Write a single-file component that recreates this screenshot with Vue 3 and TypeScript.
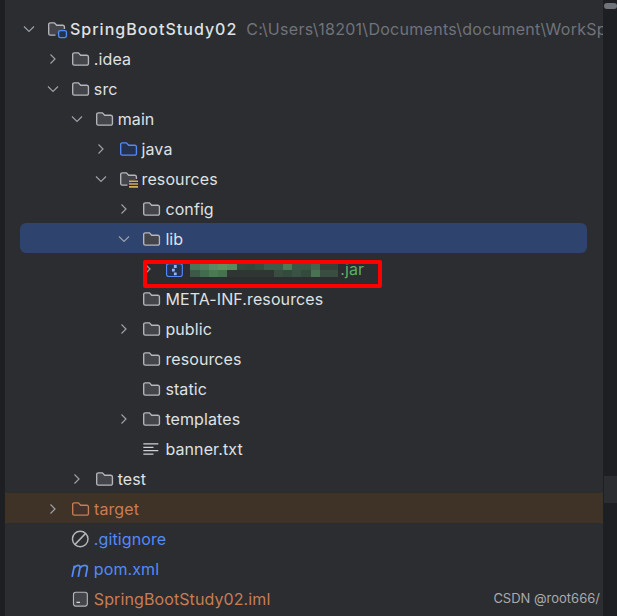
<script setup lang="ts">
type Icon = 'module' | 'folder' | 'source' | 'res' | 'jar' | 'text' | 'target' | 'ignore' | 'maven' | 'iml'

interface Row {
  name: string
  depth: number
  icon: Icon
  arrow?: 'open' | 'closed'
  tone?: string
  state?: string
}

const rows: Row[] = [
  { name: 'SpringBootStudy02', depth: 0, icon: 'module', arrow: 'open', tone: 'root' },
  { name: '.idea', depth: 1, icon: 'folder', arrow: 'closed' },
  { name: 'src', depth: 1, icon: 'folder', arrow: 'open' },
  { name: 'main', depth: 2, icon: 'folder', arrow: 'open' },
  { name: 'java', depth: 3, icon: 'source', arrow: 'closed' },
  { name: 'resources', depth: 3, icon: 'res', arrow: 'open' },
  { name: 'config', depth: 4, icon: 'folder', arrow: 'closed' },
  { name: 'lib', depth: 4, icon: 'folder', arrow: 'open', state: 'selected' },
  { name: '.jar', depth: 5, icon: 'jar', arrow: 'closed', tone: 'green' },
  { name: 'META-INF.resources', depth: 4, icon: 'folder' },
  { name: 'public', depth: 4, icon: 'folder', arrow: 'closed' },
  { name: 'resources', depth: 4, icon: 'folder' },
  { name: 'static', depth: 4, icon: 'folder' },
  { name: 'templates', depth: 4, icon: 'folder', arrow: 'closed' },
  { name: 'banner.txt', depth: 4, icon: 'text' },
  { name: 'test', depth: 2, icon: 'folder', arrow: 'closed' },
  { name: 'target', depth: 1, icon: 'target', arrow: 'closed', tone: 'orange', state: 'ignored' },
  { name: '.gitignore', depth: 1, icon: 'ignore', tone: 'blue' },
  { name: 'pom.xml', depth: 1, icon: 'maven', tone: 'blue' },
  { name: 'SpringBootStudy02.iml', depth: 1, icon: 'iml', tone: 'orange' },
]

// blurred-out part of the jar name
const mosaic = [
  '#4d7559', '#527d5c', '#5a8a63', '#5f9060', '#5a8a5e', '#35493c', '#33483a', '#364c3e',
  '#3e5a48', '#3e5a48', '#4f7a55', '#3c5646', '#3c5646', '#45644d', '#344239', '#344239',
  '#3c5a47', '#446a50', '#4a7a52', '#47724f', '#2f3532', '#2f3532', '#2f3532', '#2f3532',
  '#2f3532', '#3a4d41', '#344a3c', '#3a5244', '#344a3c', '#4b7052', '#3a4d41', '#3a4d41',
]

const folderPath = 'M1.5 4A1.5 1.5 0 0 1 3 2.5h3.6l2 2.2H14A1.5 1.5 0 0 1 15.5 6.2V12A1.5 1.5 0 0 1 14 13.5H3A1.5 1.5 0 0 1 1.5 12Z'
const openFolderPath = 'M7.5 13.5H3A1.5 1.5 0 0 1 1.5 12V4A1.5 1.5 0 0 1 3 2.5h3.6l2 2.2H14A1.5 1.5 0 0 1 15.5 6.2V8'
</script>

<template>
  <main class="panel">
    <div class="tree">
      <div
        v-for="row in rows"
        :key="row.name + row.depth"
        class="row"
        :class="row.state"
        :style="{ paddingLeft: 23 + row.depth * 23.85 + 'px' }"
      >
        <span class="arrow">
          <svg v-if="row.arrow" width="12" height="12" viewBox="0 0 12 12" fill="none" stroke="#9da0a8" stroke-width="1.2">
            <path v-if="row.arrow === 'open'" d="M1 3.5 6 8.5l5-5" />
            <path v-else d="M3.5 1.5 8 6l-4.5 4.500" />
          </svg>
        </span>

        <svg class="icon" width="18" height="18" viewBox="0 0 16 16" fill="none">
          <template v-if="row.icon === 'folder'">
            <path :d="folderPath" fill="#43454a" stroke="#b4b6bc" stroke-width="1.2" />
          </template>
          <template v-else-if="row.icon === 'source'">
            <path :d="folderPath" fill="#25324d" stroke="#548af7" stroke-width="1.2" />
          </template>
          <template v-else-if="row.icon === 'target'">
            <path :d="folderPath" fill="#45322b" stroke="#c77d55" stroke-width="1.2" />
          </template>
          <template v-else-if="row.icon === 'module'">
            <path :d="openFolderPath" fill="#43454a" stroke="#b4b6bc" stroke-width="1.2" />
            <rect x="10.3" y="9.4" width="7" height="6.2" rx="1.5" fill="#25324d" stroke="#548af7" stroke-width="1.2" />
          </template>
          <template v-else-if="row.icon === 'res'">
            <path :d="openFolderPath" fill="#43454a" stroke="#b4b6bc" stroke-width="1.2" />
            <path d="M8.9 10h8M8.9 12.5h8M8.9 15h8" stroke="#d6ae58" stroke-width="1.4" />
          </template>
          <template v-else-if="row.icon === 'jar'">
            <rect x="0.5" y="3.2" width="14" height="11.5" rx="2" fill="#25324d" stroke="#548af7" />
            <path d="M7 4.5h2.500v2.500H7zM5.300 7.700h2.500v2.500H5.300zM7 11h2.500v2.500H7z" fill="#8fb4fb" />
          </template>
          <template v-else-if="row.icon === 'text'">
            <path d="M1.2 3.5h13.3M1.2 6.500h9M1.2 9.500h13.300M1.200 12.500h9" stroke="#ced0d6" stroke-width="1.2" />
          </template>
          <template v-else-if="row.icon === 'ignore'">
            <circle cx="8.2" cy="8" r="6.900" stroke="#b4b6bb" stroke-width="1.3" />
            <path d="M3.400 13 13 3" stroke="#b4b6bb" stroke-width="1.3" />
          </template>
          <template v-else-if="row.icon === 'maven'">
            <path d="M1 15 3 5M2.800 7C5 4 8.300 4 8 7L6.500 15M8 7C10.200 4 15 4 14.500 7L13 15" stroke="#548af7" stroke-width="1.6" />
          </template>
          <template v-else-if="row.icon === 'iml'">
            <rect x="2.2" y="2" width="12.300" height="12.300" rx="2" fill="#43454a" stroke="#b4b6bb" />
            <path d="M4.800 11H8" stroke="#ced0d6" stroke-width="1.2" />
          </template>
        </svg>

        <span v-if="row.icon === 'jar'" class="mosaic">
          <i v-for="(c, i) in mosaic" :key="i" :style="{ background: c }"></i>
        </span>
        <span class="name" :class="row.tone">{{ row.name }}</span>
        <span v-if="row.icon === 'module'" class="path">C:\Users\18201\Documents\document\WorkSp</span>
      </div>
    </div>

    <div class="scrollbar">
      <span class="thumb top"></span>
      <span class="thumb mark"></span>
    </div>

    <div class="redbox"></div>
    <div class="watermark">CSDN @root666/</div>
  </main>
</template>

<style scoped>
.panel {
  position: relative;
  width: 617px;
  height: 616px;
  display: flex;
  overflow: hidden;
  background: #2b2d30;
  font-family: Inter, 'Liberation Sans', sans-serif;
  font-size: 16px;
  color: #dfe1e5;
  border-left: 5px solid #1e1f22;
  box-sizing: border-box;
}

.tree {
  width: 598px;
  padding-top: 13px;
  overflow: hidden;
  flex: none;
}

.row {
  height: 30px;
  box-sizing: border-box;
  padding-top: 2px;
  display: flex;
  align-items: center;
  white-space: nowrap;
  overflow: hidden;
  margin-left: -5px;
}

.row.selected {
  margin-left: 15px;
  margin-right: 16px;
  padding-left: 98.400px !important;
  background: #2e436e;
  border-radius: 6px;
}

.row.ignored {
  margin-left: 0;
  padding-left: 42px !important;
  background: #3f3226;
}

.arrow {
  width: 12px;
  height: 12px;
  flex: none;
  margin-right: 12px;
  display: flex;
}

.icon {
  flex: none;
  margin-right: 5px;
  overflow: visible;
}

.name {
  letter-spacing: 0.1px;
}

.name.root {
  font-weight: 500;
  letter-spacing: 1px;
}

.name.green {
  color: #5fad65;
}

.name.orange {
  color: #c77d55;
}

.name.blue {
  color: #548af7;
}

.path {
  margin-left: 9px;
  letter-spacing: 0.28px;
  color: #6f737a;
}

.mosaic {
  display: grid;
  grid-template-columns: repeat(16, 1fr);
  grid-template-rows: 8px 7px;
  width: 148px;
  margin-left: 1px;
  margin-right: 2px;
  flex: none;
}

.scrollbar {
  position: relative;
  flex: 1;
  background: #1e1f22;
}

.thumb {
  position: absolute;
  left: 1px;
  right: 0;
}

.thumb.top {
  top: 3px;
  height: 6px;
  border-radius: 3px;
  background: #6f737a;
}

.thumb.mark {
  top: 476px;
  height: 27px;
  background: #2b2d30;
}

.redbox {
  position: absolute;
  left: 138px;
  top: 260px;
  width: 239px;
  height: 28px;
  box-sizing: border-box;
  border: 4px solid #fe0000;
  border-radius: 2px;
}

.watermark {
  position: absolute;
  right: 17px;
  top: 590px;
  font-size: 13px;
  color: #a9abaf;
}
</style>
